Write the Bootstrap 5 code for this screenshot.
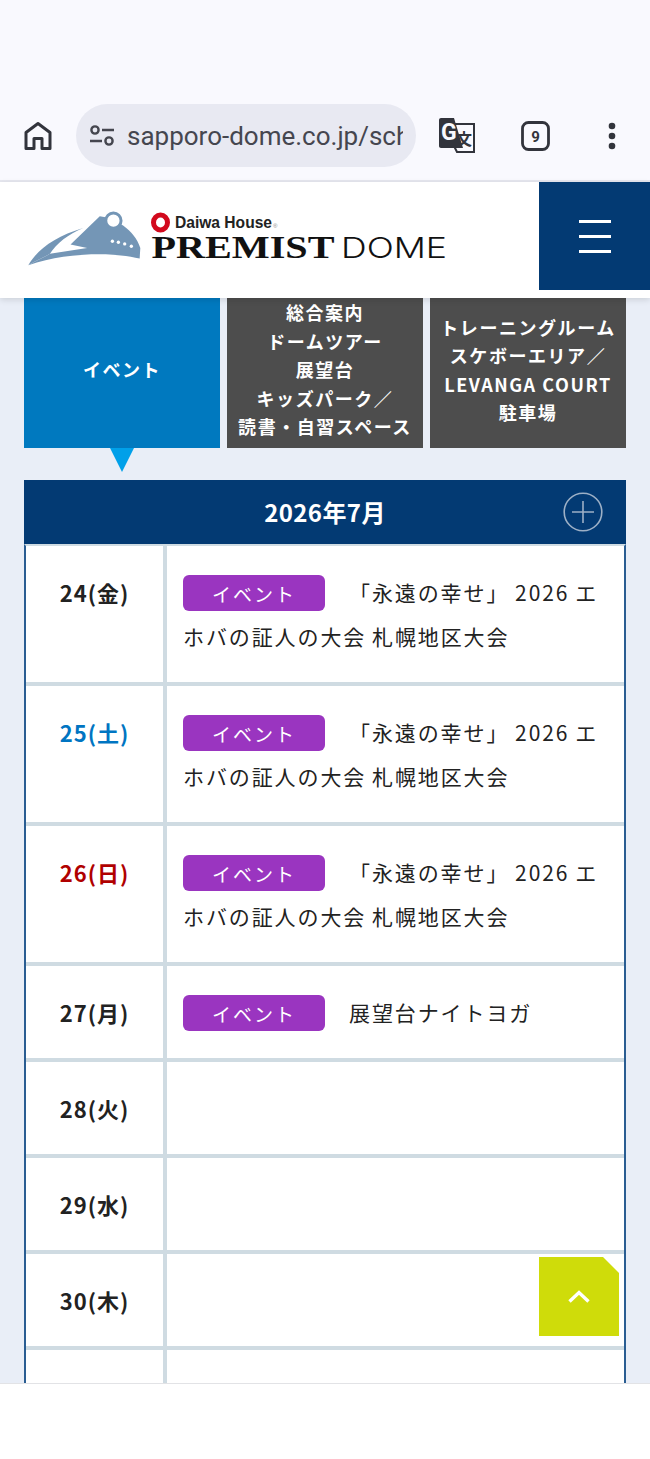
<!DOCTYPE html>
<html lang="ja">
<head>
    <meta charset="UTF-8">
    <meta name="viewport" content="width=device-width, initial-scale=1.0">
    <title>イベントスケジュール</title>
    <link href="https://cdn.jsdelivr.net/npm/bootstrap@5.3.0/dist/css/bootstrap.min.css" rel="stylesheet">
    <style>
        html, body { height: 1459px; overflow: hidden; }
        body { font-family: "Noto Sans CJK JP", "Noto Sans", sans-serif; background: #fff; color: #222; }

        /* browser toolbar */
        .browser-bar { height: 182px; padding: 104px 0 0 0; background: #f9f9fe; border-bottom: 2px solid #e6e7ef; }
        .browser-home { width: 76px; height: 63px; }
        .url-pill { width: 340px; height: 63px; border-radius: 32px; background: #e8e9f2; padding: 0 13px; }
        .url-text { font: 400 26px Roboto, sans-serif; color: #45464f; white-space: nowrap; overflow: hidden; min-width: 0; }
        .browser-icon { width: 76px; height: 63px; }

        /* site header */
        .site-header { height: 116px; background: #fff; box-shadow: 0 2px 6px rgba(0, 0, 0, .12); z-index: 2; }
        .logo-wrap { padding: 28px 0 0 28px; }
        .menu-btn { width: 111px; height: 108px; background: #033a73; }
        .menu-line { width: 32px; height: 3px; background: #fff; margin-bottom: 12px; }
        .menu-line:last-child { margin-bottom: 0; }

        /* content */
        .page-area { height: 1201px; background: #e9eef7; padding: 0 24px; overflow: hidden; }
        .tab-row { gap: 7px; }
        .tab-item { width: 196px; height: 150px; padding-bottom: 7px; background: #4d4d4d; color: #fff; font-size: 18px; font-weight: 700; line-height: 28.5px; letter-spacing: 1.55px; }
        .tab-item.is-on { background: #0079bf; }
        .tab-arrow { width: 0; height: 0; margin: 0 0 8px 86px; border-left: 12.5px solid transparent; border-right: 12.5px solid transparent; border-top: 24px solid #00a0e9; }

        .month-bar { height: 64px; background: #033a73; color: #fff; font-size: 24px; font-weight: 700; letter-spacing: .4px; }
        .month-plus { position: absolute; right: 23px; top: 12px; }

        .cal-table { width: 100%; border-collapse: separate; border-spacing: 0; background: #fff; border-left: 2px solid #2a5d92; border-right: 2px solid #2a5d92; border-top: 2px solid #cfdbe2; }
        .cal-table td { padding: 24px 24px 24px 16px; border-bottom: 4px solid #cfdbe2; font-size: 21px; line-height: 44px; letter-spacing: 1.9px; word-spacing: -.8px; vertical-align: top; }
        .cal-table td.cal-date { width: 141px; padding: 24px 0; text-align: center; border-right: 4px solid #cfdbe2; font-weight: 700; font-size: 22px; letter-spacing: 1px; }
        .cal-table td.is-sat { color: #0075c2; }
        .cal-table td.is-sun { color: #b00000; }
        .event-tag { display: inline-block; width: 142px; height: 36px; margin-right: 24px; border-radius: 6px; background: #9a35c0; color: #fff; font-size: 19px; line-height: 37px; text-align: center; letter-spacing: 2px; vertical-align: -1px; }

        .to-top { position: absolute; left: 539px; top: 1257px; width: 80px; height: 79px; background: #cfdc0a; clip-path: polygon(0 0, 64px 0, 100% 16px, 100% 100%, 0 100%); z-index: 3; }

        .bottom-bar { position: absolute; left: 0; right: 0; top: 1383px; height: 76px; background: #fff; border-top: 1px solid #e2e3e6; z-index: 4; }
    </style>
</head>
<body class="position-relative">

    <!-- browser toolbar -->
    <div class="browser-bar d-flex align-items-start">
        <div class="browser-home d-flex justify-content-center align-items-center">
            <svg width="30" height="30" viewBox="0 0 30 30" fill="none" stroke="#32343c" stroke-width="3"><path d="M3 27.5V11.5L15 2.5L27 11.5V27.5H19V17.5H11V27.5Z" stroke-linejoin="round"/></svg>
        </div>
        <div class="url-pill d-flex align-items-center gap-2">
            <svg class="flex-shrink-0" width="26" height="22" viewBox="0 0 26 22" fill="none" stroke="#45464f" stroke-width="2.4"><circle cx="6" cy="5" r="3.6"/><path d="M13 5H25M1 16H13"/><circle cx="20" cy="16" r="3.6"/></svg>
            <span class="url-text ms-1">sapporo-dome.co.jp/sch</span>
        </div>
        <div class="browser-icon d-flex justify-content-center align-items-center" style="margin-left:3px">
            <svg width="36" height="36" viewBox="0 0 36 36">
                <path d="M14 6H35V34H18L14 26Z" fill="#f9f9fe" stroke="#32343c" stroke-width="2"/>
                <path d="M2 0H15L24 30H2C.9 30 0 29 0 28V2C0 .9.9 0 2 0Z" fill="#32343c"/>
                <text x="2" y="22" font-family="Roboto, sans-serif" font-size="23" font-weight="700" fill="#f9f9fe">G</text>
                <text x="17" y="27" font-family="'Noto Sans CJK SC', sans-serif" font-size="16" font-weight="700" fill="#32343c">文</text>
            </svg>
        </div>
        <div class="browser-icon d-flex justify-content-center align-items-center" style="margin-left:3px">
            <svg width="30" height="30" viewBox="0 0 30 30"><rect x="1.5" y="1.5" width="26" height="27" rx="6" fill="none" stroke="#32343c" stroke-width="2.8"/><text x="14.5" y="20.5" text-anchor="middle" font-family="Roboto, sans-serif" font-size="15" font-weight="700" fill="#32343c">9</text></svg>
        </div>
        <div class="browser-icon d-flex justify-content-center align-items-center">
            <svg width="10" height="28" viewBox="0 0 10 28" fill="#32343c"><circle cx="5" cy="4" r="3.3"/><circle cx="5" cy="14" r="3.3"/><circle cx="5" cy="24" r="3.3"/></svg>
        </div>
    </div>

    <!-- site header -->
    <header class="site-header position-relative d-flex justify-content-between align-items-start">
        <div class="logo-wrap">
            <!-- logo: coordinates are page px minus (28,210) -->
            <svg width="424" height="58" viewBox="0 0 424 58" class="d-block">
                <g transform="translate(0 3) scale(.3323) translate(-84 -55)">
                    <path d="M85 212C112 165 165 125 250 100C205 120 170 145 150 178C130 190 105 200 85 212Z" fill="#7496b6"/>
                    <path d="M300 65C345 70 405 105 422 160L420 192C340 172 200 172 85 212C105 200 130 190 150 178L262 160L212 150Z" fill="#7496b6"/>
                    <circle cx="341" cy="78" r="23" fill="#fff" stroke="#7496b6" stroke-width="9"/>
                    <circle cx="338" cy="140" r="5" fill="#fff"/><circle cx="356" cy="143" r="5" fill="#fff"/><circle cx="375" cy="148" r="5" fill="#fff"/><circle cx="395" cy="155" r="5" fill="#fff"/>
                </g>
                <ellipse cx="132.5" cy="12.5" rx="7" ry="7.4" fill="none" stroke="#d2091d" stroke-width="5"/>
                <text x="147" y="18" font-family="'Liberation Sans', sans-serif" font-weight="700" font-size="17" fill="#222" textLength="97" lengthAdjust="spacingAndGlyphs">Daiwa House</text>
                <text x="245" y="18" font-family="'Liberation Sans', sans-serif" font-size="6" fill="#888">®</text>
                <text x="123.5" y="48.3" font-family="'Liberation Serif', serif" font-weight="700" font-size="32.5" fill="#111" textLength="183" lengthAdjust="spacingAndGlyphs">PREMIST</text>
                <text x="313" y="48" font-family="Inter, sans-serif" font-weight="300" font-size="28" fill="#111" textLength="106" lengthAdjust="spacingAndGlyphs">DOME</text>
            </svg>
        </div>
        <div class="menu-btn d-flex flex-column justify-content-center align-items-center">
            <div class="menu-line"></div>
            <div class="menu-line"></div>
            <div class="menu-line"></div>
        </div>
    </header>

    <!-- schedule -->
    <main class="page-area">
        <div class="tab-row d-flex">
            <div class="tab-item is-on d-flex align-items-center justify-content-center text-center">イベント</div>
            <div class="tab-item d-flex align-items-center justify-content-center text-center">総合案内<br>ドームツアー<br>展望台<br>キッズパーク／<br>読書・自習スペース</div>
            <div class="tab-item d-flex align-items-center justify-content-center text-center">トレーニングルーム<br>スケボーエリア／<br>LEVANGA COURT<br>駐車場</div>
        </div>
        <div class="tab-arrow"></div>

        <div class="month-bar position-relative d-flex align-items-center justify-content-center">
            2026年7月
            <svg class="month-plus" width="40" height="40" viewBox="0 0 40 40" fill="none" stroke="#9db0c6" stroke-width="1.6"><circle cx="20" cy="20" r="18.8"/><path d="M20 9V31M9 20H31"/></svg>
        </div>

        <table class="cal-table">
            <tr>
                <td class="cal-date">24(金)</td>
                <td><span class="event-tag">イベント</span>「永遠の幸せ」 2026 エホバの証人の大会 札幌地区大会</td>
            </tr>
            <tr>
                <td class="cal-date is-sat">25(土)</td>
                <td><span class="event-tag">イベント</span>「永遠の幸せ」 2026 エホバの証人の大会 札幌地区大会</td>
            </tr>
            <tr>
                <td class="cal-date is-sun">26(日)</td>
                <td><span class="event-tag">イベント</span>「永遠の幸せ」 2026 エホバの証人の大会 札幌地区大会</td>
            </tr>
            <tr>
                <td class="cal-date">27(月)</td>
                <td><span class="event-tag">イベント</span>展望台ナイトヨガ</td>
            </tr>
            <tr><td class="cal-date">28(火)</td><td>&nbsp;</td></tr>
            <tr><td class="cal-date">29(水)</td><td>&nbsp;</td></tr>
            <tr><td class="cal-date">30(木)</td><td>&nbsp;</td></tr>
            <tr><td class="cal-date">31(金)</td><td>&nbsp;</td></tr>
        </table>
    </main>

    <a href="#" class="to-top d-flex align-items-center justify-content-center" aria-label="ページトップへ">
        <svg width="22" height="13" viewBox="0 0 22 13" fill="none" stroke="#fff" stroke-width="3.4"><path d="M1.5 11.5L11 2.5L20.5 11.5"/></svg>
    </a>

    <div class="bottom-bar"></div>

    <script src="https://cdn.jsdelivr.net/npm/bootstrap@5.3.0/dist/js/bootstrap.bundle.min.js"></script>
</body>
</html>
